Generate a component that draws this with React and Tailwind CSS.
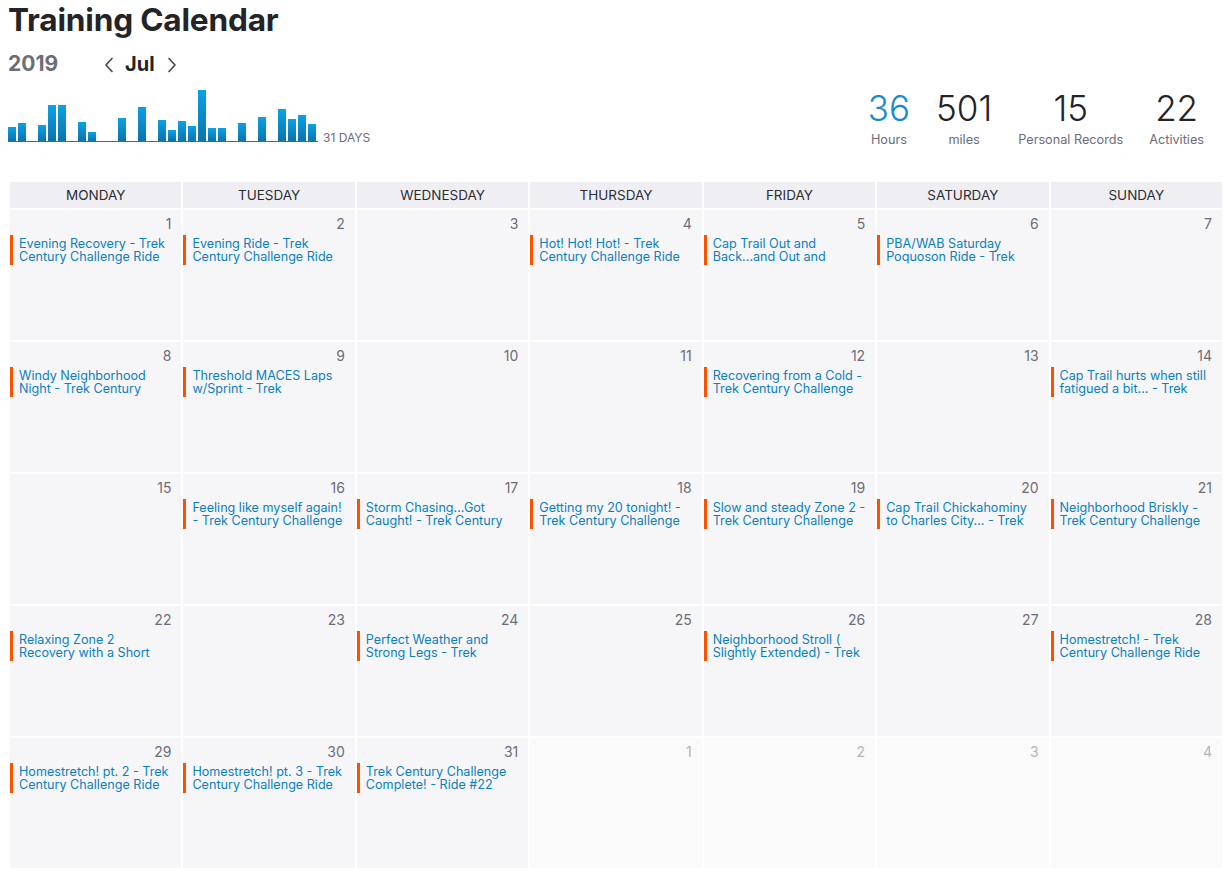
import React from "react";

const bars = [14, 18, 0, 16, 36, 36, 0, 19, 9, 0, 0, 23, 0, 34, 0, 21, 11, 20, 15, 51, 13, 13, 0, 18, 0, 24, 0, 32, 22, 26, 17];

// titles are cut to the two lines the calendar shows
const activities = {
  1: ["Evening Recovery - Trek", "Century Challenge Ride"],
  2: ["Evening Ride - Trek", "Century Challenge Ride"],
  4: ["Hot! Hot! Hot! - Trek", "Century Challenge Ride"],
  5: ["Cap Trail Out and", "Back...and Out and"],
  6: ["PBA/WAB Saturday", "Poquoson Ride - Trek"],
  8: ["Windy Neighborhood", "Night - Trek Century"],
  9: ["Threshold MACES Laps", "w/Sprint - Trek"],
  12: ["Recovering from a Cold -", "Trek Century Challenge"],
  14: ["Cap Trail hurts when still", "fatigued a bit... - Trek"],
  16: ["Feeling like myself again!", "- Trek Century Challenge"],
  17: ["Storm Chasing...Got", "Caught! - Trek Century"],
  18: ["Getting my 20 tonight! -", "Trek Century Challenge"],
  19: ["Slow and steady Zone 2 -", "Trek Century Challenge"],
  20: ["Cap Trail Chickahominy", "to Charles City... - Trek"],
  21: ["Neighborhood Briskly -", "Trek Century Challenge"],
  22: ["Relaxing Zone 2", "Recovery with a Short"],
  24: ["Perfect Weather and", "Strong Legs - Trek"],
  26: ["Neighborhood Stroll (", "Slightly Extended) - Trek"],
  28: ["Homestretch! - Trek", "Century Challenge Ride"],
  29: ["Homestretch! pt. 2 - Trek", "Century Challenge Ride"],
  30: ["Homestretch! pt. 3 - Trek", "Century Challenge Ride"],
  31: ["Trek Century Challenge", "Complete! - Ride #22"],
};

const days = ["Monday", "Tuesday", "Wednesday", "Thursday", "Friday", "Saturday", "Sunday"];

const stats = [
  { value: "36", label: "Hours", blue: true },
  { value: "501", label: "miles" },
  { value: "15", label: "Personal Records" },
  { value: "22", label: "Activities" },
];

const Chevron = ({ left }) => (
  <svg width="10" height="16" viewBox="0 0 10 16" fill="none">
    <polyline
      points={left ? "8,1.5 2,8 8,14.5" : "2,1.5 8,8 2,14.5"}
      stroke="#4a4a52"
      strokeWidth="1.7"
      strokeLinecap="round"
      strokeLinejoin="round"
    />
  </svg>
);

const App = () => {
  const cells = [];
  for (let d = 1; d <= 31; d++) cells.push({ day: d, current: true });
  for (let d = 1; d <= 4; d++) cells.push({ day: d, current: false });

  return (
    <div className="min-h-screen bg-white pl-[8px] pr-[8px] font-['Inter',sans-serif] text-[#242428]">
      <div className="flex justify-between items-start">
        <div>
          <h1 className="text-[31.6px] font-bold leading-[40px] tracking-[-0.2px]">Training Calendar</h1>
          <div className="mt-[12px] flex items-center h-[24px]">
            <span className="text-[21px] font-bold text-[#6d6d78] w-[96px]">2019</span>
            <button className="mt-[1px]">
              <Chevron left />
            </button>
            <span className="ml-[11px] mr-[12px] text-[20px] font-bold">Jul</span>
            <button className="mt-[1px]">
              <Chevron />
            </button>
          </div>
          <div className="mt-[13px] flex items-end">
            <div className="w-[310px] border-b border-[#1a78a8]">
              <div className="flex items-end h-[52px]">
                {bars.map((h, i) => (
                  <div key={i} className="w-[10px] flex-none">
                    {h > 0 && (
                      <div
                        className="w-[8px] bg-linear-to-b from-[#0aa2e6] to-[#0b74ab]"
                        style={{ height: h + "px" }}
                      />
                    )}
                  </div>
                ))}
              </div>
            </div>
            <span className="ml-[5px] mb-[-5px] text-[12px] text-[#6d6d78]">31 DAYS</span>
          </div>
        </div>
        <div className="pt-[90px] pr-[18px] flex gap-[26px]">
          {stats.map((s) => (
            <div key={s.label} className="flex flex-col items-center">
              <div
                className={
                  "text-[35px] font-light leading-[36px] " +
                  (s.blue ? "text-[#1a8bc9]" : "text-[#242428]")
                }
              >
                {s.value}
              </div>
              <div className="mt-[6px] text-[12.7px] leading-[16px] text-[#6d6d78]">{s.label}</div>
            </div>
          ))}
        </div>
      </div>

      <div className="mt-[34px] ml-[2px] grid grid-cols-7 gap-[2px]">
        {days.map((d) => (
          <div
            key={d}
            className="h-[26px] bg-[#efeff3] flex items-center justify-center text-[13.5px] uppercase text-[#2d2d32]"
          >
            {d}
          </div>
        ))}
        {cells.map((c, i) => (
          <div
            key={i}
            className={"h-[130px] pt-[4px] " + (c.current ? "bg-[#f6f6f8]" : "bg-[#fafafa]")}
          >
            <div
              className={
                "pr-[10px] text-right text-[14px] leading-[20px] " +
                (c.current ? "text-[#6d6d78]" : "text-[#b4b4bc]")
              }
            >
              {c.day}
            </div>
            {c.current && activities[c.day] && (
              <div className="mt-[1px] border-l-[3px] border-[#fc5200] pl-[6px] pr-[2px] py-[2px]">
                {activities[c.day].map((line, j) => (
                  <div
                    key={j}
                    className="whitespace-nowrap text-[12.6px] leading-[13px] text-[#0a80bf]"
                  >
                    {line}
                  </div>
                ))}
              </div>
            )}
          </div>
        ))}
      </div>
    </div>
  );
};

export default App;
